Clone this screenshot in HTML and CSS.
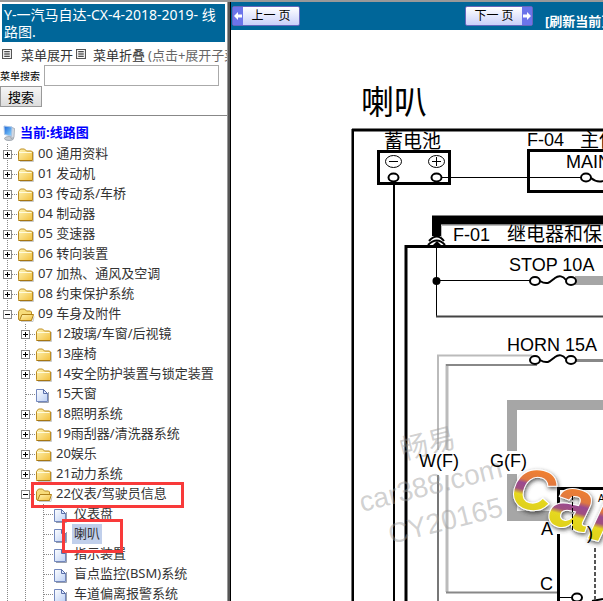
FILE: index.html
```
<!DOCTYPE html>
<html lang="zh-CN">

<head>
  <meta charset="utf-8">
  <title>Y-一汽马自达-CX-4-2018-2019- 线路图</title>
  <link rel="stylesheet" href="styles.css">
</head>

<body>
  <!-- Shared icons -->
  <svg class="sprites" width="0" height="0" aria-hidden="true">
    <defs>
      <linearGradient id="gFolder" x1="0" y1="0" x2="1" y2="1">
        <stop offset="0" stop-color="#fff6b8"/>
        <stop offset="1" stop-color="#f2bf3c"/>
      </linearGradient>
      <linearGradient id="gPage" x1="0" y1="0" x2="1" y2="1">
        <stop offset="0" stop-color="#ffffff"/>
        <stop offset="1" stop-color="#bcd0f5"/>
      </linearGradient>
      <linearGradient id="gScreen" x1="0" y1="0" x2="1" y2="1">
        <stop offset="0" stop-color="#1b63d8"/>
        <stop offset="1" stop-color="#8fdcff"/>
      </linearGradient>
    </defs>
    <symbol id="folder" viewBox="0 0 18 18">
      <path d="M2 16.500h13.500V7" fill="none" stroke="#c9c9c9"/>
      <path d="M.5 14.500V6.500l2-2.500h4l2 2h5l1 1v8.500h-14z" fill="url(#gFolder)" stroke="#bd8d22"/>
      <path d="M1 7.500h12.500" stroke="#fffbdc"/>
      <path d="M1 15.500h13" stroke="#a67612"/>
    </symbol>
    <symbol id="folder-open" viewBox="0 0 18 18">
      <path d="M3 16.500h12l1-5" fill="none" stroke="#c9c9c9"/>
      <path d="M.5 14.500V6.500l2-2.500h4l2 2h4l1 1v8h-12z" fill="#f7dc7a" stroke="#bd8d22"/>
      <path d="M1.500 15.500l2.500-6h11.500l-2 6z" fill="url(#gFolder)" stroke="#b08018"/>
    </symbol>
    <symbol id="page" viewBox="0 0 18 18">
      <path d="M2 17.500h10.500V7" fill="none" stroke="#9aa0ae"/>
      <path d="M.5 4.500h7l4 4v8h-11z" fill="url(#gPage)" stroke="#7388bd"/>
      <path d="M7.500 4.500v4h4z" fill="#dfe9ff" stroke="#5b70aa"/>
    </symbol>
    <symbol id="computer" viewBox="0 0 14 16">
      <ellipse cx="6" cy="13.500" rx="4.500" ry="2" fill="#c6cbd2" stroke="#8b939e" stroke-width=".7"/>
      <path d="M8 2l3.500 1.500-.5 9-3 1z" fill="#d7dce3" stroke="#9299a5" stroke-width=".7"/>
      <path d="M1 1l8 1-.5 9L1.500 9.500z" fill="url(#gScreen)" stroke="#a9c4e6"/>
    </symbol>
    <symbol id="list" viewBox="0 0 9 9">
      <path d="M.5.5h8v8h-8z" fill="#fff" stroke="#555"/>
      <path d="M2 2.500h5M2 4.500h5M2 6.500h5" stroke="#111"/>
    </symbol>
  </svg>

  <div class="frames">
    <aside class="sidebar">
      <h1 class="title">Y-一汽马自达-CX-4-2018-2019- 线路图.</h1>
      <div class="tree-tools">
        <svg class="list-icon"><use href="#list"/></svg>
        <a href="#open">菜单展开</a>
        <svg class="list-icon"><use href="#list"/></svg>
        <a href="#close">菜单折叠</a>
        <span class="hint">(点击+展开子菜单)</span>
      </div>
      <form class="search">
        <label for="keyword">菜单搜索</label>
        <input type="text" id="keyword">
        <button type="button">搜索</button>
      </form>

      <div class="current">
        <svg class="computer"><use href="#computer"/></svg>
        <a href="#root">当前:线路图</a>
      </div>
      <ul class="tree">
        <li><div class="row"><button class="toggle" aria-label="展开"></button><svg class="icon"><use href="#folder"/></svg><a href="#00">00 通用资料</a></div></li>
        <li><div class="row"><button class="toggle" aria-label="展开"></button><svg class="icon"><use href="#folder"/></svg><a href="#01">01 发动机</a></div></li>
        <li><div class="row"><button class="toggle" aria-label="展开"></button><svg class="icon"><use href="#folder"/></svg><a href="#03">03 传动系/车桥</a></div></li>
        <li><div class="row"><button class="toggle" aria-label="展开"></button><svg class="icon"><use href="#folder"/></svg><a href="#04">04 制动器</a></div></li>
        <li><div class="row"><button class="toggle" aria-label="展开"></button><svg class="icon"><use href="#folder"/></svg><a href="#05">05 变速器</a></div></li>
        <li><div class="row"><button class="toggle" aria-label="展开"></button><svg class="icon"><use href="#folder"/></svg><a href="#06">06 转向装置</a></div></li>
        <li><div class="row"><button class="toggle" aria-label="展开"></button><svg class="icon"><use href="#folder"/></svg><a href="#07">07 加热、通风及空调</a></div></li>
        <li><div class="row"><button class="toggle" aria-label="展开"></button><svg class="icon"><use href="#folder"/></svg><a href="#08">08 约束保护系统</a></div></li>
        <li>
          <div class="row"><button class="toggle open" aria-label="折叠"></button><svg class="icon"><use href="#folder-open"/></svg><a href="#09">09 车身及附件</a></div>
          <ul>
            <li><div class="row"><button class="toggle" aria-label="展开"></button><svg class="icon"><use href="#folder"/></svg><a href="#12">12玻璃/车窗/后视镜</a></div></li>
            <li><div class="row"><button class="toggle" aria-label="展开"></button><svg class="icon"><use href="#folder"/></svg><a href="#13">13座椅</a></div></li>
            <li><div class="row"><button class="toggle" aria-label="展开"></button><svg class="icon"><use href="#folder"/></svg><a href="#14">14安全防护装置与锁定装置</a></div></li>
            <li><div class="row"><span class="branch"></span><svg class="icon"><use href="#page"/></svg><a href="#15">15天窗</a></div></li>
            <li><div class="row"><button class="toggle" aria-label="展开"></button><svg class="icon"><use href="#folder"/></svg><a href="#18">18照明系统</a></div></li>
            <li><div class="row"><button class="toggle" aria-label="展开"></button><svg class="icon"><use href="#folder"/></svg><a href="#19">19雨刮器/清洗器系统</a></div></li>
            <li><div class="row"><button class="toggle" aria-label="展开"></button><svg class="icon"><use href="#folder"/></svg><a href="#20">20娱乐</a></div></li>
            <li><div class="row"><button class="toggle" aria-label="展开"></button><svg class="icon"><use href="#folder"/></svg><a href="#21">21动力系统</a></div></li>
            <li>
              <div class="row"><button class="toggle open" aria-label="折叠"></button><svg class="icon"><use href="#folder-open"/></svg><a href="#22">22仪表/驾驶员信息</a><span class="mark mark-group"></span></div>
              <ul>
                <li><div class="row"><span class="branch"></span><svg class="icon"><use href="#page"/></svg><a href="#22-1">仪表盘</a></div></li>
                <li><div class="row"><span class="branch"></span><svg class="icon"><use href="#page"/></svg><a class="selected" href="#22-2">喇叭</a><span class="mark mark-item"></span></div></li>
                <li><div class="row"><span class="branch"></span><svg class="icon"><use href="#page"/></svg><a href="#22-3">指示装置</a></div></li>
                <li><div class="row"><span class="branch"></span><svg class="icon"><use href="#page"/></svg><a href="#22-4">盲点监控(BSM)系统</a></div></li>
                <li><div class="row"><span class="branch"></span><svg class="icon"><use href="#page"/></svg><a href="#22-5">车道偏离报警系统</a></div></li>
              </ul>
            </li>
          </ul>
        </li>
      </ul>
    </aside>

    <div class="divider"></div>

    <main class="viewer">
      <nav class="toolbar">
        <button class="pager prev"><svg class="arrow" viewBox="0 0 10 16"><path d="M1 8l4-4v2.500h4v3H5V12z"/></svg><span>上一 页</span></button>
        <button class="pager next"><span>下一 页</span><svg class="arrow" viewBox="0 0 10 16"><path d="M9 8L5 4v2.500H1v3h4V12z"/></svg></button>
        <a class="refresh" href="#refresh">[刷新当前页]</a>
      </nav>

      <svg class="diagram" width="640" height="640" viewBox="231 30 640 640">
        <defs>
          <linearGradient id="gUpper" x1="0" y1="0" x2="0" y2="1">
            <stop offset=".2" stop-color="#f08030"/>
            <stop offset=".38" stop-color="#e07840"/>
            <stop offset=".44" stop-color="#9a4a90"/>
            <stop offset=".54" stop-color="#a05080"/>
            <stop offset=".62" stop-color="#e6d820"/>
            <stop offset="1" stop-color="#d8c818"/>
          </linearGradient>
          <linearGradient id="gLower" x1="0" y1="0" x2="0" y2="1">
            <stop offset=".3" stop-color="#f08030"/>
            <stop offset=".46" stop-color="#e07840"/>
            <stop offset=".52" stop-color="#9a4a90"/>
            <stop offset=".6" stop-color="#a05080"/>
            <stop offset=".66" stop-color="#e6d820"/>
            <stop offset="1" stop-color="#d8c818"/>
          </linearGradient>
          <filter id="shadow" x="-20%" y="-20%" width="150%" height="150%">
            <feDropShadow dx="1" dy="2" stdDeviation="2" flood-color="#333" flood-opacity=".8"/>
          </filter>
        </defs>

        <text class="heading" x="361" y="114">喇叭</text>

        <!-- outer frame -->
        <path class="w3" d="M871 130H352"/>
        <path d="M352 129V670" stroke="#777" stroke-width="2"/>
        <path d="M353 129V670" stroke="#000" stroke-width="2"/>

        <!-- battery -->
        <text class="cjk" x="384" y="148">蓄电池</text>
        <path class="w3" d="M378.500 151.500h71v32h-71z"/>
        <g class="w1">
          <ellipse cx="393.500" cy="161.500" rx="8" ry="6"/>
          <ellipse cx="436.500" cy="161.500" rx="8" ry="6"/>
          <path d="M389 161.500h9M432 161.500h9M436.500 157v9"/>
        </g>
        <path class="w1" d="M441 177.500H581"/>
        <path class="w2" d="M394 181V670"/>
        <ellipse class="pin" cx="393.500" cy="177.500" rx="5" ry="4"/>
        <ellipse class="pin" cx="436.500" cy="177.500" rx="5" ry="4"/>

        <!-- F-04 main fuse block -->
        <text class="label" x="527" y="146">F-04</text>
        <text class="cjk" x="580" y="147">主保险丝盒</text>
        <path class="w3" d="M871 150.500H528.500v41H871"/>
        <text class="label" x="566" y="168">MAIN</text>
        <path class="w2" d="M591 178q6 5 12 3"/>
        <ellipse class="pin" cx="586" cy="177.500" rx="5" ry="4"/>

        <!-- F-01 relay and fuse block -->
        <path d="M871 220H436.500V236" fill="none" stroke="#000" stroke-width="9"/>
        <path d="M871 225.500H441.500V240" fill="none" stroke="#bbb"/>
        <path class="w2" d="M429 241q8-9 15 0M428 245q9-9 17 0"/>
        <path d="M432 246l5-5 5 5z"/>
        <text class="label" x="453" y="241">F-01</text>
        <text class="cjk" x="507" y="241">继电器和保险丝盒</text>
        <path class="w3" d="M871 246.500H406V670"/>

        <path class="w1" d="M436.500 248V316M436.500 280.500H530"/>
        <path d="M436 316.500H871" stroke="#444" stroke-width="2"/>
        <circle cx="436.500" cy="281" r="4"/>

        <text class="label" x="509" y="271">STOP 10A</text>
        <path d="M575 280.500H871" stroke="#a6a6a6" stroke-width="9"/>
        <path class="fuse" d="M540 281c8 5 11 0 15-3s8-2 11 2"/>
        <ellipse class="pin" cx="535" cy="281" rx="5" ry="4"/>
        <ellipse class="pin" cx="571" cy="281" rx="5" ry="4"/>

        <!-- horn circuit -->
        <text class="label" x="507" y="351">HORN 15A</text>
        <path d="M532 355.500H438V450" fill="none" stroke="#bbb" stroke-width="2"/>
        <path d="M438 475V670" stroke="#777" stroke-width="2"/>
        <path d="M447 364V450M447 475V592" stroke="#bbb" stroke-width="3"/>
        <path d="M446 365H537" stroke="#888" stroke-width="2"/>
        <path d="M446 592.500H558" stroke="#888" stroke-width="2"/>
        <path d="M576 360.500H871" stroke="#888" stroke-width="3"/>
        <path class="fuse" d="M540 360c8 5 11 0 15-3s8-2 11 2"/>
        <ellipse class="pin" cx="535" cy="360" rx="5" ry="4"/>
        <ellipse class="pin" cx="571" cy="360" rx="5" ry="4"/>

        <path d="M871 405H512V451M512 474V516H550" fill="none" stroke="#a6a6a6" stroke-width="10"/>

        <!-- horn relay -->
        <path class="w3" d="M871 488.500H558.500V512M558.500 534V670"/>
        <path class="w1" d="M560 597.500h13"/>
        <ellipse class="pin" cx="577" cy="597.500" rx="5" ry="4"/>
        <path class="w2" d="M592 601l11-2"/>
        <path d="M595 548V670" stroke="#555" stroke-width="2" stroke-dasharray="4 2"/>
        <text class="small" x="598" y="502">A</text>

        <!-- watermark -->
        <g class="watermark">
          <text transform="translate(403 460) rotate(-14)">畅易</text>
          <text transform="translate(362 512) rotate(-14)">car388.com</text>
          <text transform="translate(391 544) rotate(-14)">CY20165</text>
        </g>

        <text class="label" x="419" y="467">W(F)</text>
        <text class="label" x="490" y="467">G(F)</text>
        <text class="label" x="541" y="535">A</text>
        <text class="label" x="540" y="590">C</text>

        <g class="logo" filter="url(#shadow)">
          <text class="upper" transform="translate(508 504) rotate(14)">C</text>
          <text class="lower" transform="translate(547 523) rotate(14)">a</text>
          <text class="lower" transform="translate(587 538) rotate(14)">r</text>
        </g>
        <path class="w1" d="M572.500 496V532" stroke-dasharray="4 2"/>
        <text class="label" x="587" y="539">)</text>
      </svg>
    </main>
  </div>
</body>

</html>
```

FILE: styles.css
```
body, html {
  margin: 0;
  padding: 0;
  height: 100%;
}

body {
  background: #fff;
  color: #333;
  font-family: "Noto Sans", "Noto Sans CJK SC", sans-serif;
  font-size: 13px;
}

a {
  color: inherit;
  text-decoration: none;
}

.sprites {position: absolute;}

.frames {
  display: flex;
  box-sizing: border-box;
  height: 100vh;
  border-top: 2px solid #999;
  overflow: hidden;
}

/* Left menu */
.sidebar {
  flex: 0 0 227px;
  overflow: hidden;
}

.title {
  margin: 2px;
  padding: 2px;
  background: #069;
  color: #fff;
  font-size: 14px;
  font-weight: normal;
  line-height: 17px;
}

.tree-tools {
  display: flex;
  align-items: center;
  height: 20px;
  padding: 0 2px 1px;
  white-space: nowrap;
}

.tree-tools a {margin: 0 3px 0 9px;}
.tree-tools a + .list-icon + a {margin-left: 7px;}
.tree-tools .hint {color: #666;}

.list-icon {
  flex: none;
  width: 10px;
  height: 10px;
}

.search {
  display: flex;
  flex-wrap: wrap;
  align-items: center;
  padding-bottom: 8px;
  border-bottom: 1px solid #888;
}

.search label {
  width: 44px;
  color: #000;
  font-size: 10px;
}

.search input {
  box-sizing: border-box;
  width: 175px;
  height: 21px;
  border: 1px solid #aaa;
}

.search button {
  box-sizing: border-box;
  width: 42px;
  height: 21px;
  padding: 0;
  border: 1px solid #999;
  background: linear-gradient(#f6f6f6, #ddd);
  color: #000;
  font: inherit;
  line-height: 18px;
}

.current {
  display: flex;
  align-items: center;
  height: 20px;
  padding: 7px 0 1px 3px;
  color: #00f;
  font-weight: bold;
}

.computer {
  width: 14px;
  height: 16px;
  margin-right: 3px;
}

.current a {line-height: 16px; padding-bottom: 2px;}

/* Tree */
.tree, .tree ul {
  margin: 0;
  padding: 0;
  list-style: none;
}

.tree ul {margin-left: 18px;}

.tree li {
  background: repeating-linear-gradient(#888 0 1px, transparent 1px 2px) 7px 0 / 1px 100% no-repeat;
}

.row {
  position: relative;
  display: flex;
  align-items: center;
  height: 20px;
  white-space: nowrap;
}

.toggle, .branch {
  flex: none;
  width: 18px;
  height: 9px;
  padding: 0;
  border: 0;
}

.toggle {
  background:
    linear-gradient(#000, #000) 5px 4px / 5px 1px no-repeat,
    linear-gradient(#000, #000) 7px 2px / 1px 5px no-repeat,
    linear-gradient(#fff, #fff) 4px 1px / 7px 7px no-repeat,
    linear-gradient(#888, #888) 3px 0 / 9px 9px no-repeat,
    repeating-linear-gradient(90deg, #888 0 1px, transparent 1px 2px) 12px 4px / 6px 1px no-repeat;
}

.toggle.open {
  background:
    linear-gradient(#000, #000) 5px 4px / 5px 1px no-repeat,
    linear-gradient(#fff, #fff) 4px 1px / 7px 7px no-repeat,
    linear-gradient(#888, #888) 3px 0 / 9px 9px no-repeat,
    repeating-linear-gradient(90deg, #888 0 1px, transparent 1px 2px) 12px 4px / 6px 1px no-repeat;
}

.branch {
  background: repeating-linear-gradient(90deg, #888 0 1px, transparent 1px 2px) 8px 4px / 10px 1px no-repeat;
}

.icon {
  flex: none;
  width: 18px;
  height: 18px;
}

.row a {
  padding: 0 2px 2px;
  line-height: 18px;
}

.row .selected {background: #c0cfeb;}

/* Red highlight boxes over the menu */
.mark {
  position: absolute;
  box-sizing: border-box;
  border: 3px solid #f83a3a;
  pointer-events: none;
  z-index: 1;
}

.mark-group {
  top: -2px;
  left: 13px;
  width: 153px;
  height: 26px;
}

.mark-item {
  top: -5px;
  left: 26px;
  width: 61px;
  height: 34px;
}

.divider {
  flex: 0 0 4px;
  background: linear-gradient(90deg, #999 0 1px, #555 1px 3px, #000 3px);
}

/* Right page */
.viewer {
  flex: 1;
  min-width: 0;
  overflow: hidden;
}

.toolbar {
  display: flex;
  align-items: center;
  height: 28px;
  background: #069;
  white-space: nowrap;
}

.pager {
  display: flex;
  flex: none;
  align-items: center;
  box-sizing: border-box;
  width: 68px;
  height: 20px;
  padding: 0;
  border: 1px solid #66b;
  border-radius: 2px;
  background: linear-gradient(#fff, #c9d0fa);
  color: #000;
  font-family: inherit;
  font-size: 12px;
}

.pager span {
  flex: 1;
  text-align: center;
  line-height: 16px;
}

.prev {margin: 0 165px 0 1px;}

.arrow {
  width: 10px;
  height: 18px;
  background: #6c74ea;
  fill: #fff;
}

.refresh {
  margin: 10px 0 0 12px;
  color: #fff;
  font-size: 13px;
  font-weight: bold;
  line-height: 18px;
}

/* Wiring diagram */
.diagram {
  display: block;
  font-family: "Liberation Sans", "Noto Sans CJK SC", sans-serif;
}

.diagram .heading {font-size: 33px;}
.diagram .label {font-size: 18px;}
.diagram .cjk {font-size: 19px;}
.diagram .small {font-size: 10px;}

.w1, .w2, .w3, .fuse, .pin {
  fill: none;
  stroke: #000;
}

.w1 {stroke-width: 1px;}
.w2 {stroke-width: 2px;}
.w3 {stroke-width: 3px;}
.fuse {stroke-width: 2px;}

.pin {
  fill: #fff;
  stroke-width: 2px;
}

.watermark {
  fill: #999;
  fill-opacity: .45;
  font-size: 28px;
}

.logo {
  stroke: #fff;
  stroke-width: 2px;
  paint-order: stroke;
  font-weight: bold;
  font-style: italic;
}

.logo .upper {
  fill: url(#gUpper);
  font-size: 58px;
}

.logo .lower {
  fill: url(#gLower);
  font-size: 74px;
}
```
